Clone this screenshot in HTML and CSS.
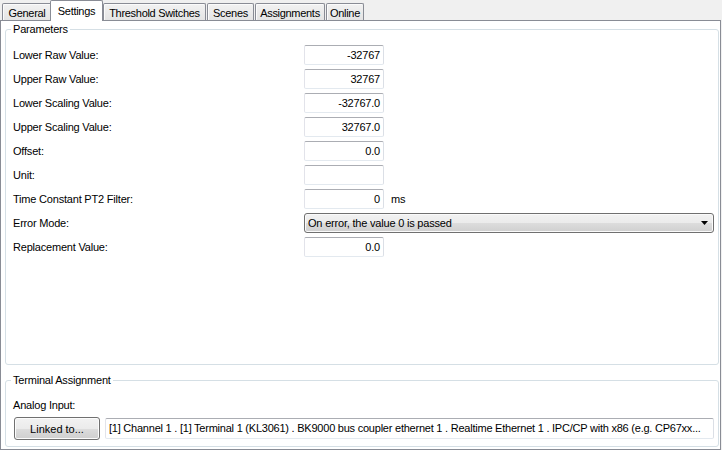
FILE: index.html
```html
<!DOCTYPE html>
<html>
<head>
<meta charset="utf-8">
<link rel="stylesheet" href="styles.css">
</head>
<body>
<div class="tabs">
  <div class="tab t-general">General</div>
  <div class="tab active t-settings">Settings</div>
  <div class="tab t-threshold">Threshold Switches</div>
  <div class="tab t-scenes">Scenes</div>
  <div class="tab t-assign">Assignments</div>
  <div class="tab t-online">Online</div>
</div>
<div class="panel">
  <fieldset class="group params">
    <legend>Parameters</legend>
    <div class="form">
      <div class="row"><span class="label">Lower Raw Value:</span><span class="field">-32767</span></div>
      <div class="row"><span class="label">Upper Raw Value:</span><span class="field">32767</span></div>
      <div class="row"><span class="label">Lower Scaling Value:</span><span class="field">-32767.0</span></div>
      <div class="row"><span class="label">Upper Scaling Value:</span><span class="field">32767.0</span></div>
      <div class="row"><span class="label">Offset:</span><span class="field">0.0</span></div>
      <div class="row"><span class="label">Unit:</span><span class="field"></span></div>
      <div class="row"><span class="label">Time Constant PT2 Filter:</span><span class="field">0</span><span class="unit">ms</span></div>
      <div class="row"><span class="label">Error Mode:</span>
        <div class="combo"><span>On error, the value 0 is passed</span>
          <svg class="arrow" width="7" height="4" viewBox="0 0 7 4"><path d="M0 0H7L3.5 4Z" fill="#000"/></svg>
        </div>
      </div>
      <div class="row"><span class="label">Replacement Value:</span><span class="field">0.0</span></div>
    </div>
  </fieldset>
  <fieldset class="group terminal">
    <legend>Terminal Assignment</legend>
    <div class="sublabel">Analog Input:</div>
    <div class="link-row">
      <button class="btn">Linked to...</button>
      <div class="field wide">[1] Channel 1 . [1] Terminal 1 (KL3061) . BK9000 bus coupler ethernet 1 . Realtime Ethernet 1 . IPC/CP with x86 (e.g. CP67xx...</div>
    </div>
  </fieldset>
</div>
</body>
</html>
```
FILE: styles.css
```css
html, body {
  margin: 0;
  padding: 0;
}
body {
  background: #f0f0f0;
  font: 11px "Liberation Sans", Arial, sans-serif;
  letter-spacing: -0.2px;
  color: #000;
  width: 722px;
  height: 450px;
  overflow: hidden;
}
.tabs {
  display: flex;
  align-items: flex-end;
  height: 20px;
  padding-left: 2px;
}
.tab {
  flex: none;
  box-sizing: border-box;
  height: 17px;
  border: 1px solid #898c95;
  border-bottom: 0;
  border-radius: 2px 2px 0 0;
  background: linear-gradient(#f2f2f2, #e4e4e4);
  box-shadow: inset 1px 1px 0 #fbfbfb;
  display: flex;
  align-items: center;
  justify-content: center;
  padding-top: 1px;
  white-space: nowrap;
  letter-spacing: -0.3px;
}
.tab.active {
  position: relative;
  z-index: 1;
  height: 21px;
  margin-bottom: -1px;
  background: #fff;
  box-shadow: none;
  padding-top: 0;
  padding-bottom: 1px;
}
.t-general { width: 50px; }
.t-settings { width: 53px; margin-left: -2px; }
.t-threshold { width: 103px; margin-right: 1px; }
.t-scenes { width: 47px; margin-right: 1px; }
.t-assign { width: 70px; margin-right: 1px; }
.t-online { width: 38px; }

.panel {
  box-sizing: border-box;
  width: 721px;
  height: 430px;
  background: #fff;
  border: 1px solid #898c95;
  display: flex;
  flex-direction: column;
}
.group {
  box-sizing: border-box;
  margin: 0 1px 0 4px;
  padding: 0 4px 0 7px;
  border: 1px solid #d5dfe5;
  border-radius: 3px;
  min-width: 0;
}
.group legend {
  padding: 0 2px;
  margin-left: -2px;
  line-height: 13px;
}
.params {
  margin-top: 2px;
  height: 342px;
  padding-top: 9px;
}
.terminal {
  margin-top: 9px;
  height: 73px;
  padding-top: 12px;
}
.form {
  display: flex;
  flex-direction: column;
  gap: 4px;
}
.row {
  display: grid;
  grid-template-columns: 291px 80px 1fr;
  height: 20px;
  align-items: center;
}
.field {
  box-sizing: border-box;
  height: 20px;
  background: #fff;
  border: 1px solid;
  border-color: #abadb3 #dbdfe6 #e3e9ef #e2e3ea;
  border-radius: 2px;
  text-align: right;
  padding: 0 3px;
  line-height: 18px;
  white-space: nowrap;
  overflow: hidden;
}
.unit {
  padding-left: 7px;
}
.combo {
  grid-column: 2 / 4;
  box-sizing: border-box;
  height: 20px;
  border: 1px solid #707070;
  border-radius: 3px;
  background: linear-gradient(#f2f2f2 0%, #ebebeb 50%, #dddddd 50%, #cfcfcf 100%);
  box-shadow: inset 0 0 0 1px #fafafa;
  display: flex;
  align-items: center;
  justify-content: space-between;
  padding: 0 5px 0 3px;
}
.sublabel {
  line-height: 13px;
}
.link-row {
  display: flex;
  align-items: center;
  margin-top: 5px;
}
.btn {
  box-sizing: border-box;
  width: 86px;
  height: 23px;
  margin: 0 0 0 1px;
  padding: 0;
  border: 1px solid #707070;
  border-radius: 3px;
  background: linear-gradient(#f2f2f2 0%, #ebebeb 50%, #dddddd 50%, #cfcfcf 100%);
  box-shadow: inset 0 0 0 1px #fcfcfc;
  font: inherit;
  color: #000;
}
.field.wide {
  flex: 1;
  margin-left: 5px;
  height: 21px;
  line-height: 19px;
  text-align: left;
  letter-spacing: -0.23px;
}
```
